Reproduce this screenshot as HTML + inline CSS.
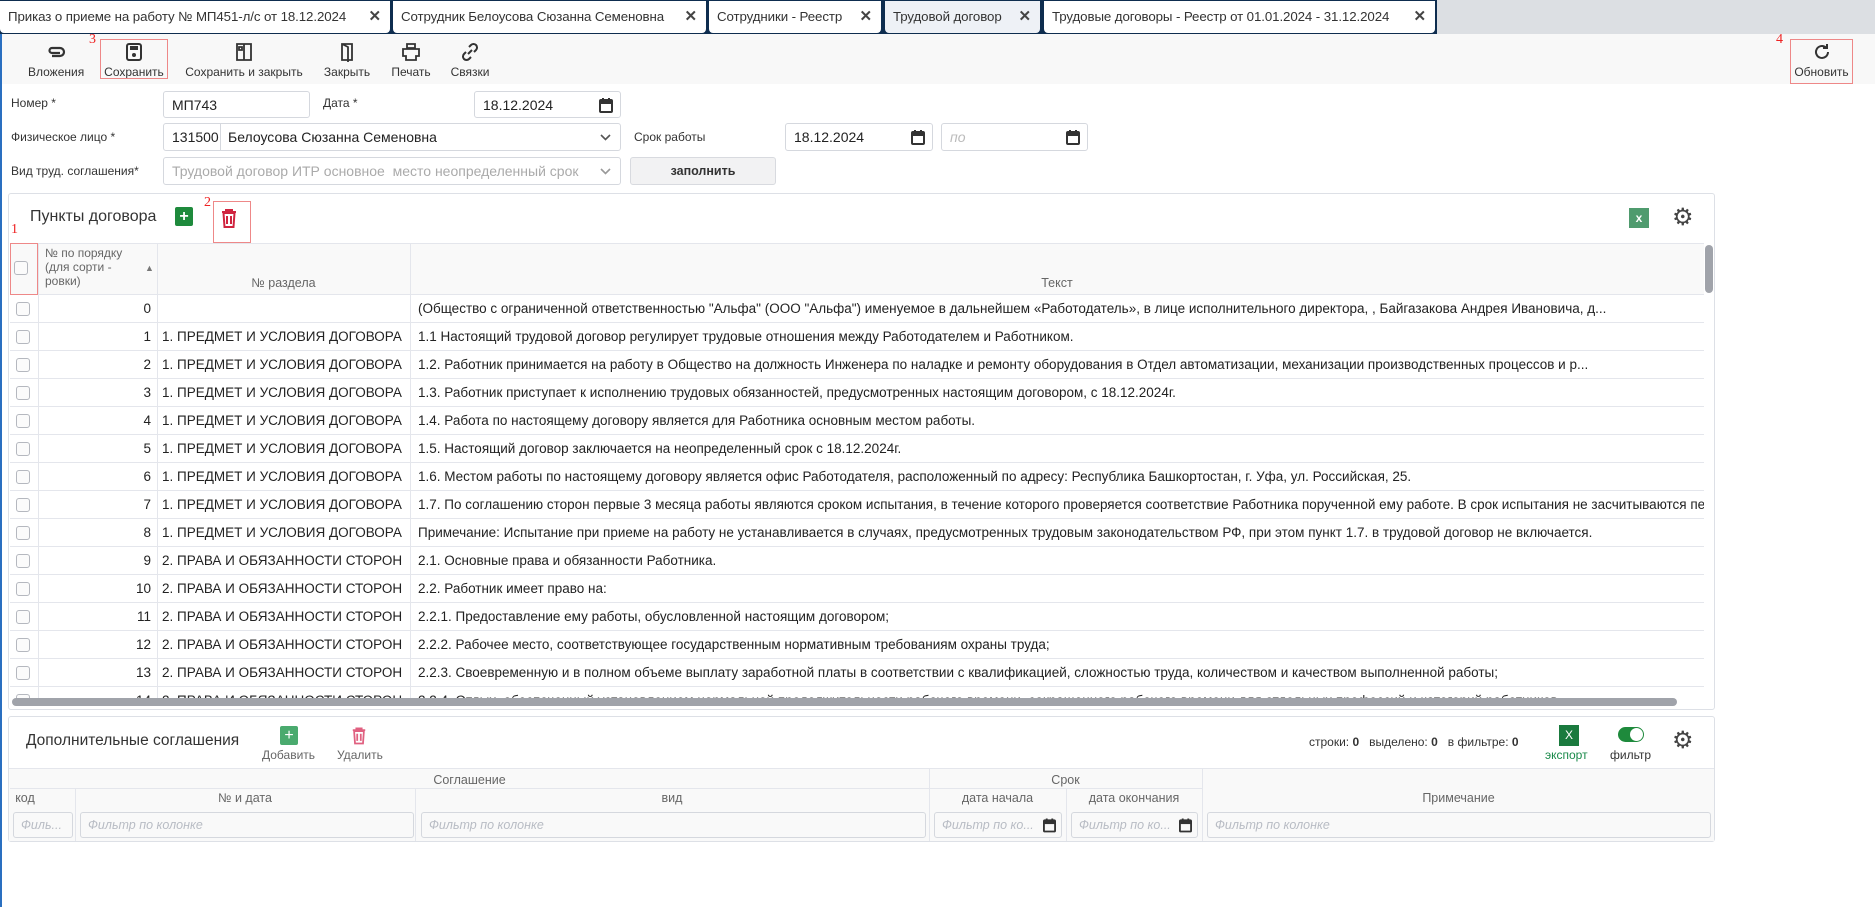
<!DOCTYPE html>
<html><head><meta charset="utf-8">
<style>
*{box-sizing:border-box;margin:0;padding:0}
body{width:1875px;height:907px;overflow:hidden;background:#fff;font-family:"Liberation Sans","Noto Sans CJK SC",sans-serif;color:#222;position:relative;font-size:13px}
.a{position:absolute}
.tabs{left:0;top:0;width:1875px;height:34px;background:#dcdfe3}
.tabsdark{left:0;top:0;width:1437px;height:34px;background:#0e2d4f}
.tab{position:absolute;top:1px;height:32px;background:#fff;border-radius:0 0 4px 4px;font-size:13.3px;line-height:32px;padding-left:8px;white-space:nowrap;color:#333;letter-spacing:-0.1px}
.tab b{position:absolute;right:9px;top:0;font-size:15px;font-weight:bold;color:#444}
.tb{left:2px;top:34px;width:1873px;height:50px;background:#f8f8f8}
.ti{position:absolute;top:38px;text-align:center;font-size:12px;color:#333}
.ti svg{display:block;margin:4px auto 3px}
.lbl{position:absolute;font-size:12px;color:#333}
.inp{position:absolute;border:1px solid #d5d8de;border-radius:3px;background:#fff;font-size:14px;line-height:26px;padding-left:8px;color:#222;white-space:nowrap;overflow:hidden}
.cal{position:absolute;right:7px;top:5px}
.red{position:absolute;border:1.5px solid #e88;}
.rn{position:absolute;color:#e22;font-family:"Liberation Serif",serif;font-size:14px}
.panel{position:absolute;border:1px solid #dde0e6;border-radius:3px;background:#fff}
.row{position:absolute;left:10px;width:1694px;height:28px;border-bottom:1px solid #e4e6ec;font-size:13.5px;line-height:27px;white-space:nowrap}
.row .cb{position:absolute;left:6px;top:7px;width:14px;height:14px;border:1px solid #b5b8bf;border-radius:3px;background:#fbfbfb}
.row .n{position:absolute;left:28px;width:113px;text-align:right}
.row .s{position:absolute;left:152px;width:245px}
.row .t{position:absolute;left:408px;width:1286px;overflow:hidden}
.vl{position:absolute;width:1px;background:#e4e6ec}
.hd{position:absolute;font-size:12.5px;color:#666;text-align:center}
.flt{position:absolute;top:812px;height:26px;border:1px solid #d5d8de;border-radius:3px;font-style:italic;color:#b8bcc4;font-size:12.5px;line-height:24px;padding-left:7px;white-space:nowrap;overflow:hidden}
</style></head><body>
<div class="a tabs"></div>
<div class="a tabsdark"></div>
<div class="tab" style="left:0;width:390px">Приказ о приеме на работу № МП451-л/с от 18.12.2024<b>✕</b></div>
<div class="tab" style="left:393px;width:313px">Сотрудник Белоусова Сюзанна Семеновна<b>✕</b></div>
<div class="tab" style="left:709px;width:172px">Сотрудники - Реестр<b>✕</b></div>
<div class="tab" style="left:885px;width:155px;background:#eef1f6">Трудовой договор<b>✕</b></div>
<div class="tab" style="left:1044px;width:391px">Трудовые договоры - Реестр от 01.01.2024 - 31.12.2024<b>✕</b></div>
<div class="a" style="left:0;top:34px;width:2px;height:873px;background:#2a6fc0"></div>
<div class="a tb"></div>

<div class="ti" style="left:28px;width:56px"><svg width="20" height="20" viewBox="0 0 20 20"><path d="M6 14h8a4 4 0 0 0 0-8H6a2.5 2.5 0 0 0 0 5h8" fill="none" stroke="#333" stroke-width="2.2"/></svg>Вложения</div>
<div class="ti" style="left:100px;width:68px"><svg width="20" height="20" viewBox="0 0 20 20"><rect x="3" y="2" width="14" height="16" rx="2" fill="none" stroke="#333" stroke-width="2"/><rect x="6" y="4" width="8" height="4" fill="#333"/><circle cx="10" cy="13" r="2" fill="#333"/></svg>Сохранить</div>
<div class="red" style="left:100px;top:39px;width:68px;height:40px"></div>
<div class="rn" style="left:89px;top:32px">3</div>
<div class="ti" style="left:184px;width:120px"><svg width="20" height="20" viewBox="0 0 20 20"><path d="M3 2h14v16H3z M10 2v16 M5 5h3v3H5z" fill="none" stroke="#333" stroke-width="1.8"/></svg>Сохранить и закрыть</div>
<div class="ti" style="left:322px;width:50px"><svg width="20" height="20" viewBox="0 0 20 20"><path d="M5 2h10v16H5z M5 2l6 3v15" fill="none" stroke="#333" stroke-width="1.8"/></svg>Закрыть</div>
<div class="ti" style="left:388px;width:46px"><svg width="20" height="20" viewBox="0 0 20 20"><path d="M6 2h8v4H6z M2 7h16v7h-3v4H5v-4H2z" fill="none" stroke="#333" stroke-width="1.8"/></svg>Печать</div>
<div class="ti" style="left:448px;width:44px"><svg width="20" height="20" viewBox="0 0 20 20"><path d="M8 12l4-4 M9 5l2-2a3 3 0 0 1 5 5l-2 2 M11 15l-2 2a3 3 0 0 1-5-5l2-2" fill="none" stroke="#333" stroke-width="2"/></svg>Связки</div>
<div class="ti" style="left:1790px;width:63px"><svg width="20" height="20" viewBox="0 0 20 20"><path d="M16 10a6 6 0 1 1-2-4.5 M15 2v4h-4" fill="none" stroke="#333" stroke-width="2"/></svg>Обновить</div>
<div class="red" style="left:1790px;top:39px;width:63px;height:45px"></div>
<div class="rn" style="left:1776px;top:32px">4</div>

<div class="lbl" style="left:11px;top:96px">Номер *</div>
<div class="inp" style="left:163px;top:91px;width:147px;height:27px">МП743</div>
<div class="lbl" style="left:323px;top:96px">Дата *</div>
<div class="inp" style="left:474px;top:91px;width:147px;height:27px">18.12.2024<svg class="cal" width="14" height="16" viewBox="0 0 14 16"><rect x="1" y="3" width="12" height="12" rx="1" fill="none" stroke="#333" stroke-width="2"/><rect x="1" y="3" width="12" height="4" fill="#333"/><path d="M4 1v3M10 1v3" stroke="#333" stroke-width="2"/></svg></div>
<div class="lbl" style="left:11px;top:130px">Физическое лицо *</div>
<div class="inp" style="left:163px;top:123px;width:458px;height:28px">131500<span class="a" style="left:56px;top:0;height:26px;border-left:1px solid #d5d8de;padding-left:7px">Белоусова Сюзанна Семеновна</span><svg class="a" style="right:9px;top:10px" width="11" height="7" viewBox="0 0 11 7"><path d="M1 1l4.5 4.5L10 1" fill="none" stroke="#555" stroke-width="1.6"/></svg></div>
<div class="lbl" style="left:634px;top:130px">Срок работы</div>
<div class="inp" style="left:785px;top:123px;width:148px;height:28px">18.12.2024<svg class="cal" width="14" height="16" viewBox="0 0 14 16"><rect x="1" y="3" width="12" height="12" rx="1" fill="none" stroke="#333" stroke-width="2"/><rect x="1" y="3" width="12" height="4" fill="#333"/><path d="M4 1v3M10 1v3" stroke="#333" stroke-width="2"/></svg></div>
<div class="inp" style="left:941px;top:123px;width:147px;height:28px;color:#bbb;font-style:italic">по<svg class="cal" width="14" height="16" viewBox="0 0 14 16"><rect x="1" y="3" width="12" height="12" rx="1" fill="none" stroke="#333" stroke-width="2"/><rect x="1" y="3" width="12" height="4" fill="#333"/><path d="M4 1v3M10 1v3" stroke="#333" stroke-width="2"/></svg></div>
<div class="lbl" style="left:11px;top:164px">Вид труд. соглашения*</div>
<div class="inp" style="left:163px;top:157px;width:458px;height:28px;color:#aaa">Трудовой договор ИТР основное&nbsp; место неопределенный срок<svg class="a" style="right:9px;top:10px" width="11" height="7" viewBox="0 0 11 7"><path d="M1 1l4.5 4.5L10 1" fill="none" stroke="#999" stroke-width="1.6"/></svg></div>
<div class="a" style="left:630px;top:157px;width:146px;height:28px;background:#f2f2f3;border:1px solid #d8dadf;border-radius:3px;text-align:center;line-height:26px;font-size:12.5px;font-weight:bold;color:#333">заполнить</div>

<div class="panel" style="left:8px;top:193px;width:1707px;height:517px"></div>
<div class="a" style="left:30px;top:208px;font-size:16px;color:#333">Пункты договора</div>
<div class="a" style="left:175px;top:207px;width:18px;height:19px;background:#1e8a3c;border-radius:2px;color:#fff;text-align:center;line-height:19px;font-size:16px;font-weight:bold">+</div>
<svg class="a" style="left:220px;top:208px" width="18" height="20" viewBox="0 0 18 20"><path d="M2 4h14 M6 4V2h6v2 M3.5 5h11l-1 14h-9z M7 8v8 M11 8v8" fill="none" stroke="#d0243f" stroke-width="2"/></svg>
<div class="red" style="left:213px;top:201px;width:38px;height:42px"></div>
<div class="rn" style="left:204px;top:195px">2</div>
<div class="a" style="left:1629px;top:208px;width:20px;height:20px;background:#4f9b6e;color:#fff;text-align:center;font-size:12px;line-height:20px;font-weight:bold">x</div>
<div class="a" style="left:1672px;top:203px;font-size:24px;color:#444">⚙</div>

<div class="a" style="left:10px;top:243px;width:1694px;height:52px;background:#f9f9f9;border-top:1px solid #e4e6ec;border-bottom:1px solid #e4e6ec"></div>
<div class="a" style="left:14px;top:261px;width:14px;height:14px;border:1px solid #b5b8bf;border-radius:3px;background:#fbfbfb"></div>
<div class="a" style="left:45px;top:246px;font-size:12px;color:#666;line-height:14px">№ по порядку<br>(для сорти -<br>ровки)</div>
<div class="a" style="left:145px;top:263px;font-size:9px;color:#777">▲</div>
<div class="hd" style="left:157px;width:253px;top:276px">№ раздела</div>
<div class="hd" style="left:410px;width:1294px;top:276px">Текст</div>
<div class="red" style="left:10px;top:243px;width:28px;height:52px"></div>
<div class="rn" style="left:11px;top:222px">1</div>
<div class="a" style="left:1705px;top:245px;width:8px;height:48px;background:#a0a3aa;border-radius:4px"></div>

<div class="row" style="top:295px"><div class="cb"></div><div class="n">0</div><div class="s"></div><div class="t">(Общество с ограниченной ответственностью "Альфа" (ООО "Альфа") именуемое в дальнейшем «Работодатель», в лице исполнительного директора, , Байгазакова Андрея Ивановича, д...</div></div>
<div class="row" style="top:323px"><div class="cb"></div><div class="n">1</div><div class="s">1. ПРЕДМЕТ И УСЛОВИЯ ДОГОВОРА</div><div class="t">1.1 Настоящий трудовой договор регулирует трудовые отношения между Работодателем и Работником.</div></div>
<div class="row" style="top:351px"><div class="cb"></div><div class="n">2</div><div class="s">1. ПРЕДМЕТ И УСЛОВИЯ ДОГОВОРА</div><div class="t">1.2. Работник принимается на работу в Общество на должность Инженера по наладке и ремонту оборудования в Отдел автоматизации, механизации производственных процессов и р...</div></div>
<div class="row" style="top:379px"><div class="cb"></div><div class="n">3</div><div class="s">1. ПРЕДМЕТ И УСЛОВИЯ ДОГОВОРА</div><div class="t">1.3. Работник приступает к исполнению трудовых обязанностей, предусмотренных настоящим договором, с 18.12.2024г.</div></div>
<div class="row" style="top:407px"><div class="cb"></div><div class="n">4</div><div class="s">1. ПРЕДМЕТ И УСЛОВИЯ ДОГОВОРА</div><div class="t">1.4. Работа по настоящему договору является для Работника основным местом работы.</div></div>
<div class="row" style="top:435px"><div class="cb"></div><div class="n">5</div><div class="s">1. ПРЕДМЕТ И УСЛОВИЯ ДОГОВОРА</div><div class="t">1.5. Настоящий договор заключается на неопределенный срок с 18.12.2024г.</div></div>
<div class="row" style="top:463px"><div class="cb"></div><div class="n">6</div><div class="s">1. ПРЕДМЕТ И УСЛОВИЯ ДОГОВОРА</div><div class="t">1.6. Местом работы по настоящему договору является офис Работодателя, расположенный по адресу: Республика Башкортостан, г. Уфа, ул. Российская, 25.</div></div>
<div class="row" style="top:491px"><div class="cb"></div><div class="n">7</div><div class="s">1. ПРЕДМЕТ И УСЛОВИЯ ДОГОВОРА</div><div class="t">1.7. По соглашению сторон первые 3 месяца работы являются сроком испытания, в течение которого проверяется соответствие Работника порученной ему работе. В срок испытания не засчитываются периоды</div></div>
<div class="row" style="top:519px"><div class="cb"></div><div class="n">8</div><div class="s">1. ПРЕДМЕТ И УСЛОВИЯ ДОГОВОРА</div><div class="t">Примечание: Испытание при приеме на работу не устанавливается в случаях, предусмотренных трудовым законодательством РФ, при этом пункт 1.7. в трудовой договор не включается.</div></div>
<div class="row" style="top:547px"><div class="cb"></div><div class="n">9</div><div class="s">2. ПРАВА И ОБЯЗАННОСТИ СТОРОН</div><div class="t">2.1. Основные права и обязанности Работника.</div></div>
<div class="row" style="top:575px"><div class="cb"></div><div class="n">10</div><div class="s">2. ПРАВА И ОБЯЗАННОСТИ СТОРОН</div><div class="t">2.2. Работник имеет право на:</div></div>
<div class="row" style="top:603px"><div class="cb"></div><div class="n">11</div><div class="s">2. ПРАВА И ОБЯЗАННОСТИ СТОРОН</div><div class="t">2.2.1. Предоставление ему работы, обусловленной настоящим договором;</div></div>
<div class="row" style="top:631px"><div class="cb"></div><div class="n">12</div><div class="s">2. ПРАВА И ОБЯЗАННОСТИ СТОРОН</div><div class="t">2.2.2. Рабочее место, соответствующее государственным нормативным требованиям охраны труда;</div></div>
<div class="row" style="top:659px"><div class="cb"></div><div class="n">13</div><div class="s">2. ПРАВА И ОБЯЗАННОСТИ СТОРОН</div><div class="t">2.2.3. Своевременную и в полном объеме выплату заработной платы в соответствии с квалификацией, сложностью труда, количеством и качеством выполненной работы;</div></div>
<div class="row" style="top:687px;height:12px;overflow:hidden;border:none"><div class="cb"></div><div class="n">14</div><div class="s">2. ПРАВА И ОБЯЗАННОСТИ СТОРОН</div><div class="t">2.2.4. Отдых, обеспеченный установлением нормальной продолжительности рабочего времени, сокращенного рабочего времени для отдельных профессий и категорий работников</div></div>
<div class="vl" style="left:38px;top:243px;height:455px"></div>
<div class="vl" style="left:157px;top:243px;height:455px"></div>
<div class="vl" style="left:410px;top:243px;height:455px"></div>
<div class="a" style="left:12px;top:698px;width:1665px;height:8px;background:#a0a3aa;border-radius:4px"></div>

<div class="panel" style="left:8px;top:716px;width:1707px;height:126px"></div>
<div class="a" style="left:26px;top:732px;font-size:15.5px;color:#333">Дополнительные соглашения</div>
<div class="a" style="left:280px;top:726px;width:18px;height:19px;background:#4aaa6e;border-radius:2px;color:#fff;text-align:center;line-height:19px;font-size:16px">+</div>
<div class="a" style="left:262px;top:748px;font-size:12px;color:#666">Добавить</div>
<svg class="a" style="left:351px;top:726px" width="16" height="19" viewBox="0 0 18 20"><path d="M2 4h14 M6 4V2h6v2 M3.5 5h11l-1 14h-9z M7 8v8 M11 8v8" fill="none" stroke="#e06080" stroke-width="2"/></svg>
<div class="a" style="left:337px;top:748px;font-size:12px;color:#666">Удалить</div>
<div class="a" style="left:1309px;top:735px;font-size:12px;color:#333">строки: <b>0</b>&nbsp;&nbsp; выделено: <b>0</b>&nbsp;&nbsp; в фильтре: <b>0</b></div>
<div class="a" style="left:1559px;top:725px;width:20px;height:21px;background:#1a7a3e;color:#fff;text-align:center;font-size:12px;line-height:21px">X</div>
<div class="a" style="left:1545px;top:748px;font-size:12px;color:#1a8a4a">экспорт</div>
<div class="a" style="left:1618px;top:727px;width:26px;height:15px;background:#1e8a3c;border-radius:8px"><div class="a" style="right:1px;top:1px;width:13px;height:13px;background:#fff;border-radius:50%"></div></div>
<div class="a" style="left:1610px;top:748px;font-size:12px;color:#333">фильтр</div>
<div class="a" style="left:1672px;top:726px;font-size:24px;color:#444">⚙</div>

<div class="a" style="left:9px;top:768px;width:1705px;height:73px;background:#f9f9f9;border-top:1px solid #e4e6ec"></div>
<div class="hd" style="left:10px;width:919px;top:773px">Соглашение</div>
<div class="hd" style="left:929px;width:273px;top:773px">Срок</div>
<div class="a" style="left:10px;top:788px;width:1192px;height:1px;background:#e4e6ec"></div>
<div class="hd" style="left:10px;width:30px;top:791px">код</div>
<div class="hd" style="left:75px;width:340px;top:791px">№ и дата</div>
<div class="hd" style="left:415px;width:514px;top:791px">вид</div>
<div class="hd" style="left:929px;width:137px;top:791px">дата начала</div>
<div class="hd" style="left:1066px;width:136px;top:791px">дата окончания</div>
<div class="hd" style="left:1202px;width:513px;top:791px">Примечание</div>
<div class="vl" style="left:75px;top:788px;height:53px"></div>
<div class="vl" style="left:415px;top:788px;height:53px"></div>
<div class="vl" style="left:929px;top:768px;height:73px"></div>
<div class="vl" style="left:1066px;top:788px;height:53px"></div>
<div class="vl" style="left:1202px;top:768px;height:73px"></div>
<div class="flt" style="left:13px;width:60px">Филь...</div>
<div class="flt" style="left:80px;width:334px">Фильтр по колонке</div>
<div class="flt" style="left:421px;width:505px">Фильтр по колонке</div>
<div class="flt" style="left:934px;width:128px">Фильтр по ко...<svg class="a" style="right:5px;top:4px" width="13" height="16" viewBox="0 0 14 16"><rect x="1" y="3" width="12" height="12" rx="1" fill="none" stroke="#333" stroke-width="2"/><rect x="1" y="3" width="12" height="4" fill="#333"/><path d="M4 1v3M10 1v3" stroke="#333" stroke-width="2"/></svg></div>
<div class="flt" style="left:1071px;width:127px">Фильтр по ко...<svg class="a" style="right:5px;top:4px" width="13" height="16" viewBox="0 0 14 16"><rect x="1" y="3" width="12" height="12" rx="1" fill="none" stroke="#333" stroke-width="2"/><rect x="1" y="3" width="12" height="4" fill="#333"/><path d="M4 1v3M10 1v3" stroke="#333" stroke-width="2"/></svg></div>
<div class="flt" style="left:1207px;width:504px">Фильтр по колонке</div>
</body></html>
